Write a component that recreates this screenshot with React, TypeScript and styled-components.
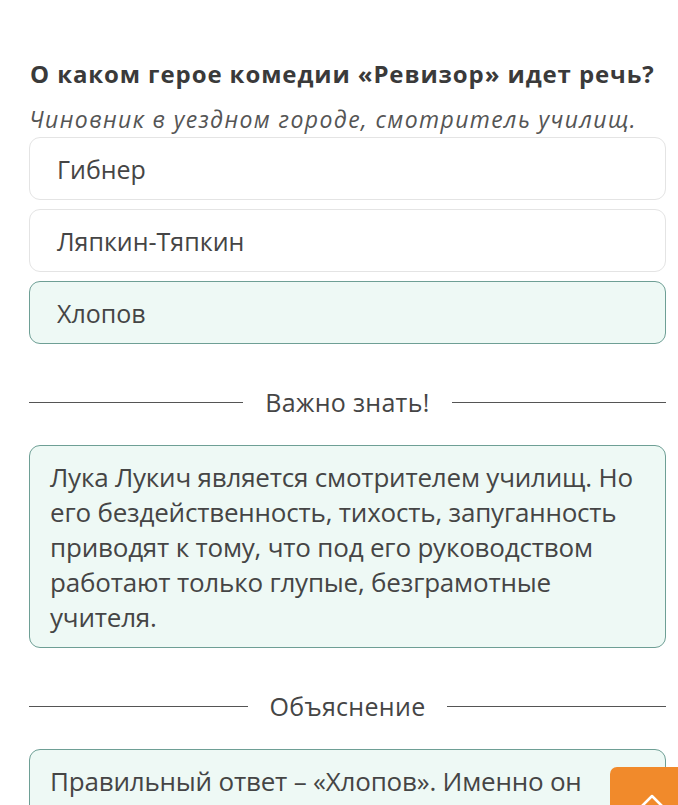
import React from "react";
import styled, {createGlobalStyle} from "styled-components";

const colors = {
    text: "#454545",
    muted: "#555555",
    border: "#e4e4e4",
    mint: "#eef9f5",
    mintBorder: "#6e9f95",
    orange: "#f18a2b",
};

const options = [
    {label: "Гибнер", correct: false},
    {label: "Ляпкин-Тяпкин", correct: false},
    {label: "Хлопов", correct: true},
];

const App = () => {
    return (
        <>
            <GlobalStyle/>
            <Page>
                <Question>О каком герое комедии «Ревизор» идет речь?</Question>
                <Hint>Чиновник в уездном городе, смотритель училищ.</Hint>
                <Options>
                    {options.map((option) => (
                        <Option key={option.label} $correct={option.correct}>{option.label}</Option>
                    ))}
                </Options>
                <Divider>Важно знать!</Divider>
                <InfoBox>
                    Лука Лукич является смотрителем училищ. Но его бездейственность, тихость, запуганность
                    приводят к тому, что под его руководством работают только глупые, безграмотные учителя.
                </InfoBox>
                <Divider>Объяснение</Divider>
                <InfoBox>
                    Правильный ответ – «Хлопов». Именно он является смотрителем училищ в уездном городе.
                </InfoBox>
            </Page>
            <ScrollTopButton aria-label="Наверх">
                <svg width="28" height="16" viewBox="0 0 28 16" fill="none">
                    <path d="M2 15 L14 3 L26 15" stroke="#fff" strokeWidth="2.5" strokeLinecap="round"
                          strokeLinejoin="round"/>
                </svg>
            </ScrollTopButton>
        </>
    );
};

const GlobalStyle = createGlobalStyle`
  body {
    margin: 0;
    background: #ffffff;
    font-family: "Open Sans", "Noto Sans", sans-serif;
    color: ${colors.text};
    overflow: hidden;
  }
`;

const Page = styled.div`
  display: flex;
  flex-direction: column;
  padding: 56px 12px 0 29px;
  height: 805px;
  box-sizing: border-box;
  overflow: hidden;
`;

const Question = styled.h1`
  margin: 0;
  font-size: 24px;
  font-weight: 700;
  line-height: 36px;
  color: #3a3a3a;
  letter-spacing: 0.9px;
  padding-left: 1px;
  white-space: nowrap;
`;

const Hint = styled.p`
  margin: 11px 0 0;
  font-size: 23px;
  font-style: italic;
  line-height: 32px;
  color: ${colors.muted};
  letter-spacing: 1.4px;
  white-space: nowrap;
`;

const Options = styled.div`
  display: flex;
  flex-direction: column;
  gap: 9px;
  margin-top: 2px;
`;

const Option = styled.div<{ $correct: boolean }>`
  display: flex;
  align-items: center;
  height: 63px;
  box-sizing: border-box;
  padding: 0 27px;
  font-size: 25px;
  border-radius: 11px;
  border: 1.5px solid ${({$correct}) => $correct ? colors.mintBorder : colors.border};
  background-color: ${({$correct}) => $correct ? colors.mint : "#ffffff"};
`;

const Divider = styled.div`
  display: flex;
  align-items: center;
  gap: 22px;
  margin: 42px 0 27px;
  font-size: 25px;
  line-height: 32px;
  color: ${colors.text};
  letter-spacing: 0.3px;

  &::before, &::after {
    content: "";
    flex: 1;
    height: 1px;
    background-color: #555555;
  }
`;

const InfoBox = styled.div`
  flex-shrink: 0;
  padding: 14px 20px 12px;
  font-size: 26px;
  line-height: 35px;
  letter-spacing: -0.2px;
  border-radius: 11px;
  border: 1.5px solid ${colors.mintBorder};
  background-color: ${colors.mint};
`;

const ScrollTopButton = styled.button`
  position: fixed;
  left: 610px;
  top: 767px;
  width: 84px;
  height: 70px;
  display: flex;
  justify-content: center;
  margin: 0;
  padding: 26px 0 0 0;
  border: none;
  border-radius: 7px 0 0 0;
  background-color: ${colors.orange};
`;

export default App;
